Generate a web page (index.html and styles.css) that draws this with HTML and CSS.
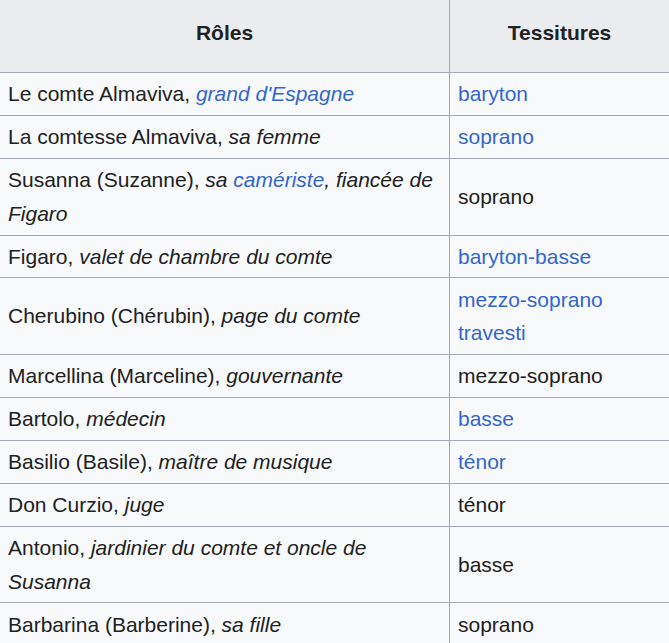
FILE: index.html
```html
<!DOCTYPE html>
<html lang="fr">
<head>
<meta charset="utf-8">
<title>Rôles</title>
<link rel="stylesheet" href="styles.css">
</head>
<body>
<table class="wikitable">
  <colgroup><col class="c-role"><col class="c-voice"></colgroup>
  <thead>
    <tr><th>Rôles</th><th>Tessitures</th></tr>
  </thead>
  <tbody>
    <tr><td>Le comte Almaviva, <i><a href="#">grand d'Espagne</a></i></td><td><a href="#">baryton</a></td></tr>
    <tr><td>La comtesse Almaviva, <i>sa femme</i></td><td><a href="#">soprano</a></td></tr>
    <tr><td>Susanna (Suzanne), <i>sa <a href="#">camériste</a>, fiancée de Figaro</i></td><td>soprano</td></tr>
    <tr><td>Figaro, <i>valet de chambre du comte</i></td><td><a href="#">baryton-basse</a></td></tr>
    <tr><td>Cherubino (Chérubin), <i>page du comte</i></td><td><a href="#">mezzo-soprano</a> <a href="#">travesti</a></td></tr>
    <tr><td>Marcellina (Marceline), <i>gouvernante</i></td><td>mezzo-soprano</td></tr>
    <tr><td>Bartolo, <i>médecin</i></td><td><a href="#">basse</a></td></tr>
    <tr><td>Basilio (Basile), <i>maître de musique</i></td><td><a href="#">ténor</a></td></tr>
    <tr><td>Don Curzio, <i>juge</i></td><td>ténor</td></tr>
    <tr><td>Antonio, <i>jardinier du comte et oncle de Susanna</i></td><td>basse</td></tr>
    <tr><td>Barbarina (Barberine), <i>sa fille</i></td><td>soprano</td></tr>
  </tbody>
</table>
</body>
</html>
```
FILE: styles.css
```css
html, body {
  margin: 0;
  padding: 0;
  background: #ffffff;
}
body {
  font-family: "Liberation Sans", Arial, sans-serif;
  font-size: 21px;
  color: #202122;
}
.wikitable {
  border-collapse: collapse;
  table-layout: fixed;
  width: 670px;
  margin: -1px 0 0 -1px;
  background: #f8f9fa;
  color: #202122;
}
.c-role { width: 450px; }
.c-voice { width: 220px; }
.wikitable th,
.wikitable td {
  border: 1px solid #a2a9b1;
  padding: 4.2px 8px;
  line-height: 33.6px;
  vertical-align: middle;
  text-align: left;
}
.wikitable th {
  background: #eaecf0;
  text-align: center;
  font-weight: bold;
  height: 66px;
  padding-top: 0;
  padding-bottom: 6px;
}
.wikitable a {
  color: #3366cc;
  text-decoration: none;
}
```
